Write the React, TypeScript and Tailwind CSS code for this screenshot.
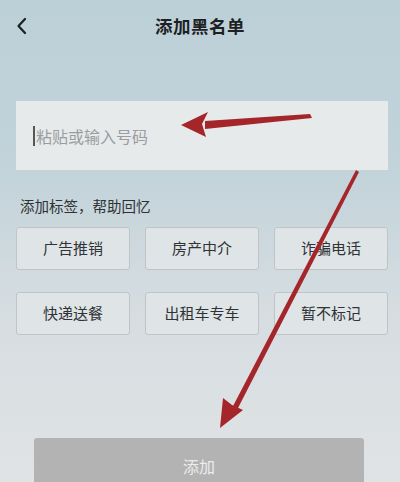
import React from "react";

const tags = ["广告推销", "房产中介", "诈骗电话", "快递送餐", "出租车专车", "暂不标记"];

export default function App() {
  return (
    <div
      className="relative w-[400px] h-[482px] overflow-hidden bg-[linear-gradient(180deg,#bcd0d8_0%,#c2d3da_35%,#d6dde1_65%,#e0e3e5_100%)]"
      style={{ fontFamily: '"Noto Sans CJK SC", "Noto Sans", sans-serif' }}
    >
      <div className="flex flex-col">
        {/* Header */}
        <div className="relative h-[52px] flex items-center justify-center">
          <svg className="absolute left-[15px] top-[17px]" width="14" height="18" viewBox="0 0 14 18">
            <path d="M10 2 L3.5 9 L10 16" fill="none" stroke="#1c1f22" strokeWidth="2.2" strokeLinecap="round" strokeLinejoin="round" />
          </svg>
          <span className="text-[17.5px] font-bold text-[#1d2124] tracking-[0.5px]">添加黑名单</span>
        </div>

        {/* Input */}
        <div className="ml-4 mr-3 mt-[49px] h-[69px] bg-[#e7eaeb] flex items-center px-[17px]">
          <span className="w-[2px] h-[20px] bg-[#555] mr-[1px]" />
          <span className="text-[16px] text-[#9a9d9f]">粘贴或输入号码</span>
        </div>

        {/* Label */}
        <div className="mt-[26px] px-5 text-[14.5px] leading-[20px] text-[#2e3235]">添加标签，帮助回忆</div>

        {/* Tags */}
        <div className="ml-4 mr-3 mt-[11px] grid grid-cols-3 gap-x-[15px] gap-y-[22px]">
          {tags.map((t) => (
            <div
              key={t}
              className="h-[43px] flex items-center justify-center rounded-[3px] border border-[#bfc4c7] bg-[#dfe4e6] text-[15px] text-[#2f3336]"
            >
              {t}
            </div>
          ))}
        </div>

        {/* Add button */}
        <div className="mt-[103px] ml-[34px] mr-[36px] h-[56px] shrink-0 bg-[#b3b3b3] rounded-t-[3px] flex items-center justify-center">
          <span className="text-[16px] text-[#ececec]">添加</span>
        </div>
      </div>

      {/* Red annotation arrows */}
      <svg className="absolute inset-0 pointer-events-none" width="400" height="482" viewBox="0 0 400 482">
        <polygon points="310,114 312,118 205,129 205,121" fill="#a5262a" />
        <polygon points="181,125 208,112 202,124 206,137" fill="#a5262a" />
        <polygon points="356,170 359,172 237,410 232,408" fill="#a5262a" />
        <polygon points="220,428 223,398 232,405 243,410" fill="#a5262a" />
      </svg>
    </div>
  );
}
